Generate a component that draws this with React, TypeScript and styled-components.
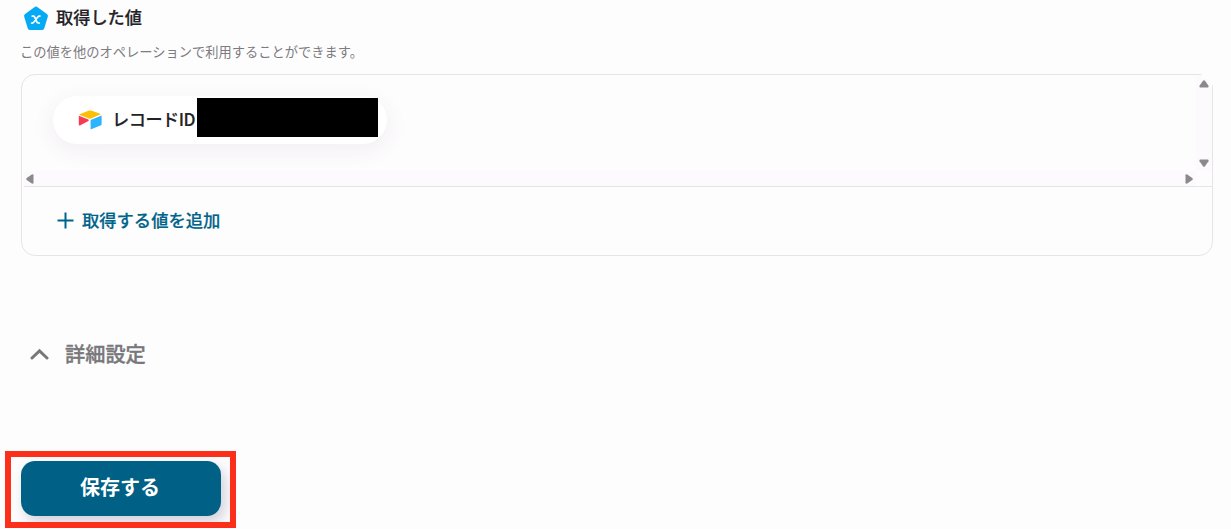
import React from "react";
import styled, { createGlobalStyle } from "styled-components";

const GlobalStyle = createGlobalStyle`
  * {
    box-sizing: border-box;
  }

  body {
    margin: 0;
    background: #fefdfe;
    color: #232226;
    font-family: "Noto Sans CJK JP", sans-serif;
    overflow: hidden;
  }

  button {
    font-family: inherit;
    border: none;
    padding: 0;
    cursor: pointer;
  }
`;

const Page = styled.main`
  height: 529px;
  padding: 4px 18px 0 21px;
  overflow: hidden;
`;

const Heading = styled.header`
  display: flex;
  align-items: center;
  height: 27px;
  padding-left: 2px;
  gap: 7px;
`;

const Title = styled.h2`
  margin: 0;
  padding-bottom: 2px;
  font-size: 17.2px;
  font-weight: 500;
  line-height: 26px;
  -webkit-text-stroke: 0.2px currentColor;
`;

const Description = styled.p`
  margin: 11px 0 0 -1px;
  color: #7c7b7e;
  font-size: 13.25px;
  line-height: 20px;
`;

const Card = styled.section`
  position: relative;
  height: 182px;
  margin-top: 12px;
  border: 1px solid #e5e4e7;
  border-radius: 14px;

  /* the scrollbar's end covers the rounded corner */
  &::after {
    content: "";
    position: absolute;
    top: -1px;
    right: -1px;
    width: 11px;
    height: 11px;
    background: linear-gradient(#fefdfe, #fefdfe) 0 0 / 11px 5px no-repeat,
      linear-gradient(#fefdfe, #fefdfe) 100% 0 / 4px 11px no-repeat;
  }
`;

const ScrollArea = styled.div`
  display: grid;
  grid-template-columns: 1fr 16px;
  grid-template-rows: 96px 15px;
  margin-left: 2px;
  border-bottom: 1px solid #e5e4e7;
`;

const Values = styled.div`
  padding: 21px 0 0 29px;
  overflow: hidden;
`;

const ScrollTrack = styled.div<{ $vertical?: boolean }>`
  display: flex;
  flex-direction: ${(props) => (props.$vertical ? "column" : "row")};
  align-items: center;
  justify-content: space-between;
  padding: ${(props) => (props.$vertical ? "4px 0 3px" : "0 2px 0 1px")};
  background: #fcfafd;
`;

const Pill = styled.div`
  display: flex;
  align-items: center;
  width: 334px;
  height: 48px;
  padding-left: 25px;
  border-radius: 24px;
  background: #fff;
  box-shadow: 0 6px 20px 3px rgba(60, 50, 70, 0.06);
`;

const PillLabel = styled.span`
  width: 85px;
  margin: -2px 0 0 10px;
  font-size: 17.2px;
  font-weight: 500;
  line-height: 26px;
  letter-spacing: -0.5px;
  white-space: nowrap;
  -webkit-text-stroke: 0.15px currentColor;
`;

const Mask = styled.span`
  width: 181px;
  height: 39px;
  margin-bottom: 5px;
  background: #000;
`;

const AddButton = styled.button`
  display: flex;
  align-items: center;
  gap: 8px;
  height: 67px;
  padding-left: 35px;
  background: transparent;
  color: #00638a;
  font-size: 17.3px;
  font-weight: 500;
`;

const AddLabel = styled.span`
  padding-bottom: 2px;
  -webkit-text-stroke: 0.2px currentColor;
`;

const DetailToggle = styled.button`
  display: flex;
  align-items: center;
  gap: 16px;
  height: 32px;
  margin: 82px 0 0 9px;
  background: transparent;
  color: #78777a;
  font-size: 20.2px;
  font-weight: 500;
  line-height: 32px;
`;

const DetailLabel = styled.span`
  -webkit-text-stroke: 0.35px currentColor;
`;

const SaveFrame = styled.div`
  width: 231px;
  height: 77px;
  margin: 81px 0 0 -16px;
  padding: 4px 0 0 10px;
  border: 6px solid #fc2f1b;
  overflow: hidden;
`;

const SaveButton = styled.button`
  width: 200px;
  height: 55px;
  padding: 0 2px 4px 0;
  border-radius: 14px;
  background: #006086;
  color: #fff;
  font-size: 20px;
  font-weight: 700;
  box-shadow: 4px 6px 14px rgba(40, 40, 80, 0.22);
`;

const VariableIcon = () => (
  <svg width="26" height="26" viewBox="0 0 26 26">
    <path
      d="M11.4 2.2Q13 1 14.6 2.2L23.9 8.9Q25.4 10 24.8 11.8L21.2 23.4Q20.6 25 18.8 25H7.2Q5.4 25 4.8 23.4L1.2 11.8Q.6 10 2.1 8.9Z"
      fill="#04aaf4"
    />
    <path
      d="M9.2 11.1H10.3Q11.2 11.1 11.7 12.1L13.9 17Q14.4 18 15.3 18H16.3M16.9 11.1Q15.7 10.8 14.8 12L10.7 17.3Q9.8 18.4 8.6 18"
      fill="none"
      stroke="#fff"
      strokeWidth="1.7"
      strokeLinecap="round"
    />
  </svg>
);

const AirtableIcon = () => (
  <svg width="24" height="20" viewBox="0 0 24 20">
    <path d="M1.6 4.2 11 .6Q12 .3 13 .6L22.2 3.7Q23 4.1 22.2 4.5L13 8.6Q12 9 11 8.6L1.6 5Q.8 4.6 1.6 4.2Z" fill="#fdbf05" />
    <path d="M.8 5.7 10.4 9.6Q11.4 10.2 10.4 10.9L1.9 15.4Q.8 15.8 .8 14.8Z" fill="#f43c55" />
    <path d="M12.6 9.9 23.6 5.5V14.9L12.6 19.4Z" fill="#2cb5fc" />
  </svg>
);

const rotation = { up: 0, right: 90, down: 180, left: 270 };

const Arrow = ({ direction }: { direction: keyof typeof rotation }) => (
  <svg width="10" height="10" viewBox="0 0 10 10">
    <path
      d="M4 1.7Q5 .6 6 1.7L9.5 6.8Q10 8.5 8.8 8.5H1.2Q0 8.5 .5 6.8Z"
      fill="#8b898c"
      transform={`rotate(${rotation[direction]} 5 5)`}
    />
  </svg>
);

function App() {
  return (
    <>
      <GlobalStyle />
      <Page>
        <Heading>
          <VariableIcon />
          <Title>取得した値</Title>
        </Heading>
        <Description>この値を他のオペレーションで利用することができます。</Description>
        <Card>
          <ScrollArea>
            <Values>
              <Pill>
                <AirtableIcon />
                <PillLabel>レコードID</PillLabel>
                <Mask />
              </Pill>
            </Values>
            <ScrollTrack $vertical>
              <Arrow direction="up" />
              <Arrow direction="down" />
            </ScrollTrack>
            <ScrollTrack>
              <Arrow direction="left" />
              <Arrow direction="right" />
            </ScrollTrack>
          </ScrollArea>
          <AddButton type="button">
            <svg width="17" height="17" viewBox="0 0 17 17">
              <path d="M8.5 .5V16.5M.5 8.5H16.5" stroke="currentColor" strokeWidth="2" />
            </svg>
            <AddLabel>取得する値を追加</AddLabel>
          </AddButton>
        </Card>
        <DetailToggle type="button">
          <svg width="19" height="12" viewBox="0 0 19 12">
            <path d="M2 10 9.5 2.8 17 10" fill="none" stroke="currentColor" strokeWidth="3" strokeLinecap="round" />
          </svg>
          <DetailLabel>詳細設定</DetailLabel>
        </DetailToggle>
        <SaveFrame>
          <SaveButton type="button">保存する</SaveButton>
        </SaveFrame>
      </Page>
    </>
  );
}

export default App;
